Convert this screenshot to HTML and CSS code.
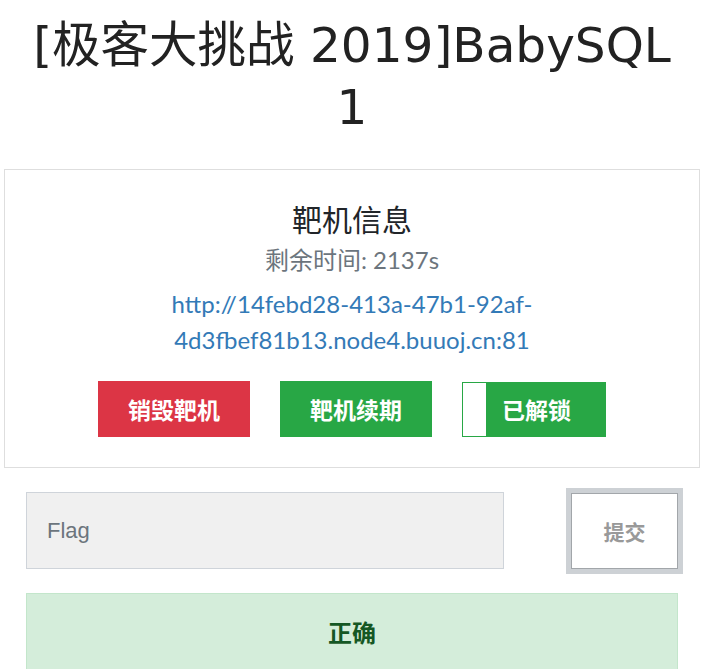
FILE: index.html
```html
<!DOCTYPE html>
<html lang="zh">
<head>
<meta charset="utf-8">
<title>BabySQL</title>
<link rel="stylesheet" href="styles.css">
</head>
<body>
<div class="page">
  <h1 class="title">[极客大挑战 2019]BabySQL 1</h1>
  <div class="card">
    <h3 class="card-title">靶机信息</h3>
    <div class="remain">剩余时间: 2137s</div>
    <a class="link" href="#">http://14febd28-413a-47b1-92af-4d3fbef81b13.node4.buuoj.cn:81</a>
    <div class="actions">
      <button class="btn btn-red">销毁靶机</button>
      <button class="btn btn-green">靶机续期</button>
      <button class="btn btn-unlocked"><span class="knob"></span><span class="label">已解锁</span></button>
    </div>
  </div>
  <div class="form">
    <div class="row">
      <input class="flag" type="text" placeholder="Flag">
      <button class="submit">提交</button>
    </div>
    <div class="result">正确</div>
  </div>
</div>
</body>
</html>
```

FILE: styles.css
```css
html, body {
  margin: 0;
  padding: 0;
  background: #fff;
}
.page {
  width: 704px;
  padding: 0 4px;
  box-sizing: border-box;
  font-family: Lato, "Noto Sans CJK SC", sans-serif;
  color: #212529;
}
.title {
  margin: 0 0 31px;
  padding: 14px 26px 0;
  text-align: center;
  font-family: "DejaVu Sans", "Noto Sans CJK SC", sans-serif;
  font-weight: 400;
  font-size: 48.5px;
  line-height: 62px;
  color: #222;
}
.card {
  border: 1px solid #dedede;
  padding: 31px 20px 30px;
  text-align: center;
  box-sizing: border-box;
}
.card-title {
  margin: 0;
  font-weight: 400;
  font-size: 30px;
  line-height: 36px;
  color: #212529;
}
.remain {
  margin-top: 9px;
  font-size: 24px;
  line-height: 28px;
  color: #6c757d;
}
.link {
  display: block;
  margin: 12px auto 0;
  width: 440px;
  font-size: 24px;
  line-height: 36px;
  color: #337ab7;
  text-decoration: none;
}
.actions {
  margin-top: 23px;
  display: flex;
  justify-content: center;
  gap: 30px;
}
.btn {
  border: 0;
  height: 56px;
  width: 152px;
  padding: 0;
  color: #fff;
  font-family: "Noto Sans CJK SC", sans-serif;
  font-weight: 700;
  font-size: 23px;
}
.btn-red { background: #dc3545; }
.btn-green { background: #28a745; }
.btn-unlocked {
  width: 144px;
  height: 55px;
  margin-top: 1px;
  background: #28a745;
  border: 1px solid #28a745;
  display: flex;
  align-items: stretch;
}
.knob {
  width: 23px;
  background: #fff;
}
.label {
  flex: 1;
  display: flex;
  align-items: center;
  justify-content: center;
  padding-right: 18px;
  padding-bottom: 2px;
}
.form {
  padding: 24px 22px 0;
}
.row {
  display: flex;
  align-items: center;
  justify-content: space-between;
}
.flag {
  width: 478px;
  height: 77px;
  box-sizing: border-box;
  border: 1px solid #cfd4da;
  background: #f0f0f0;
  padding: 0 20px;
  font-family: "Liberation Sans", Arial, sans-serif;
  font-size: 22px;
  color: #495057;
  outline: none;
}
.flag::placeholder {
  color: #6c757d;
}
.submit {
  width: 107px;
  height: 76px;
  box-sizing: border-box;
  border: 1px solid #a2a6aa;
  background: #fff;
  box-shadow: 0 0 0 5px #cdd1d5;
  color: #999;
  font-family: "Noto Sans CJK SC", sans-serif;
  font-weight: 700;
  font-size: 21px;
}
.result {
  margin-top: 24px;
  height: 77px;
  box-sizing: border-box;
  border: 1px solid #c3e6cb;
  background: #d4edda;
  color: #155724;
  font-family: "Noto Sans CJK SC", sans-serif;
  font-weight: 700;
  font-size: 24px;
  display: flex;
  align-items: center;
  justify-content: center;
}
```
